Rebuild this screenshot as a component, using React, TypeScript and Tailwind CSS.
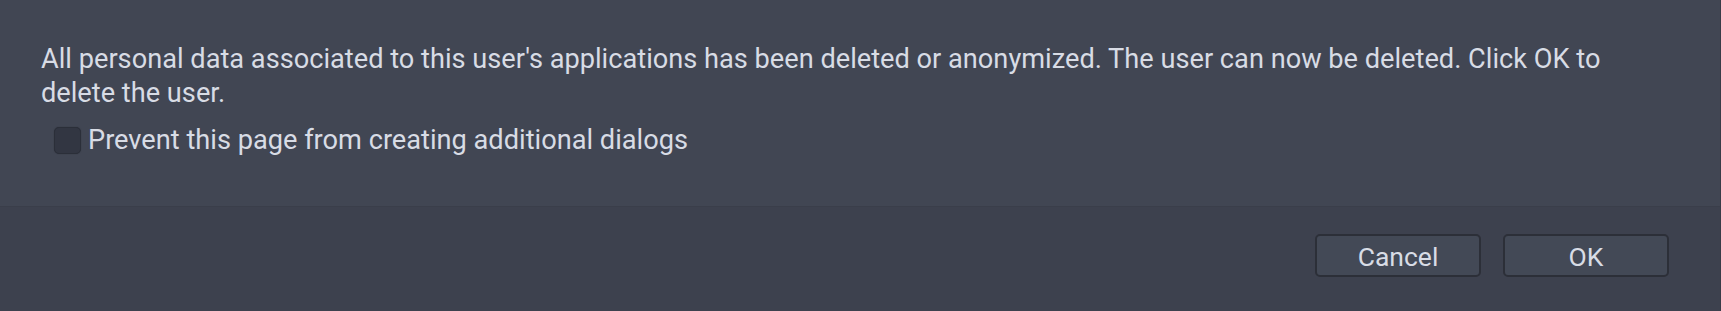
export default function App() {
  return (
    <div className="w-[1721px] h-[311px] flex flex-col bg-[#3d414e] text-[#d8dce5] font-['Roboto',sans-serif] border-r border-[#383c48]">
      <div className="h-[206px] shrink-0 bg-[#414653] pl-[41px] pt-[42px]">
        <p className="text-[27.2px] leading-[34px]">
          <span className="block whitespace-nowrap">
            All personal data associated to this user's applications has been deleted or anonymized. The user can now be deleted. Click OK to
          </span>
          <span className="block">delete the user.</span>
        </p>
        <label className="mt-[13px] ml-[13px] flex items-center gap-[7px]">
          <span className="w-[27px] h-[27px] rounded-[5px] bg-[#323642] border border-[#2b2f39] shadow-[0_0_1px_#2b2f39]" />
          <span className="text-[27.2px] leading-[34px]">Prevent this page from creating additional dialogs</span>
        </label>
      </div>
      <div className="h-px bg-[#3a3e4a]" />
      <div className="flex justify-end gap-[22px] pt-[27px] pr-[51px]">
        <button className="w-[166px] h-[43px] pt-[3px] rounded-[5px] bg-[#434956] border-2 border-[#2c2f38] text-[26.5px] leading-none text-[#d8dce5]">
          Cancel
        </button>
        <button className="w-[166px] h-[43px] pt-[3px] rounded-[5px] bg-[#434956] border-2 border-[#2c2f38] text-[26.5px] leading-none text-[#d8dce5]">
          OK
        </button>
      </div>
    </div>
  );
}
